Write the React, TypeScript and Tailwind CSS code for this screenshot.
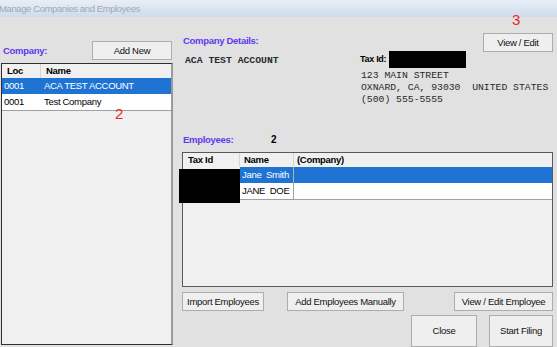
import React from "react";

function Btn({ className = "", children }: { className?: string; children: React.ReactNode }) {
  return (
    <div
      className={
        "flex items-center justify-center border border-[#adadad] bg-[#efefef] text-[#111] " + className
      }
    >
      {children}
    </div>
  );
}

export default function App() {
  const mono = "font-['Liberation_Mono',monospace] text-[9.75px] tracking-[0px] text-[#2a2a2a]";
  return (
    <div className="relative w-[557px] h-[347px] overflow-hidden bg-[#e1e1e1] font-['Liberation_Sans',Arial,sans-serif] text-[9.5px] tracking-[-0.3px] text-black leading-none">
      {/* title bar */}
      <div className="h-[17px] bg-gradient-to-b from-[#e8eef6] to-[#cfdcec] flex items-center">
        <span className="-ml-[1px] text-[#a2a9b2] text-[9.5px] tracking-[-0.4px]">
          Manage Companies and Employees
        </span>
      </div>

      <div className="flex h-[330px]">
        {/* left column */}
        <div className="w-[173px] flex flex-col">
          <div className="flex items-center justify-between pt-[24px] h-[43px]">
            <span className="pl-[3px] font-bold text-[#6038ee]">Company:</span>
            <Btn className="w-[80px] h-[19px] mr-[1px]">Add New</Btn>
          </div>
          <div className="mt-[3px] ml-[1px] h-[282px] bg-[#f0f0f0] border-l border-t border-b border-[#2f2f2f] border-r-2 border-r-[#9a9a9a] flex flex-col">
            <div className="flex h-[14px] font-bold">
              <div className="w-[39px] pl-[5px] border-r border-[#d4d4d4] flex items-center">Loc</div>
              <div className="pl-[5px] flex items-center">Name</div>
            </div>
            <div className="flex h-[16px] items-center bg-[#1e73d3] text-white">
              <div className="w-[39px] pl-[2px]">0001</div>
              <div className="pl-[3px]">ACA TEST ACCOUNT</div>
            </div>
            <div className="flex h-[17px] items-center bg-white border-b border-[#a0a0a0]">
              <div className="w-[39px] pl-[2px]">0001</div>
              <div className="pl-[3px]">Test Company</div>
            </div>
          </div>
        </div>

        {/* right column */}
        <div className="flex-1 pl-[9px] pr-[4px] flex flex-col">
          {/* company details */}
          <div className="flex h-[121px]">
            <div className="w-[178px] pt-[19px] flex flex-col">
              <div className="h-[10px] flex items-center pl-[1px] font-bold text-[#6038ee]">Company Details:</div>
              <div className={"mt-[10px] h-[10px] flex items-center pl-[3px] font-bold " + mono}>ACA TEST ACCOUNT</div>
            </div>
            <div className="w-[123px] pt-[34px] flex flex-col">
              <div className="flex h-[17px] items-center">
                <span className="w-[29px] font-bold text-[9px]">Tax Id:</span>
                <div className="w-[77px] h-[17px] bg-black" />
              </div>
              <div className={"mt-[2px] flex flex-col whitespace-pre pl-[1px] " + mono}>
                <div className="h-[12px] flex items-center">123 MAIN STREET</div>
                <div className="h-[12px] flex items-center">OXNARD, CA, 93030  UNITED STATES</div>
                <div className="h-[12px] flex items-center">(500) 555-5555</div>
              </div>
            </div>
            <div className="flex-1 pt-[16px]">
              <Btn className="w-[70px] h-[19px]">View / Edit</Btn>
            </div>
          </div>

          {/* employees label */}
          <div className="flex h-[10px] items-center">
            <span className="w-[89px] pl-[1px] font-bold text-[#6038ee]">Employees:</span>
            <span className="font-bold text-[10px]">2</span>
          </div>

          {/* employees table */}
          <div className="mt-[7px] h-[139px] border border-[#595959] bg-[#f0f0f0] flex flex-col">
            <div className="flex h-[14px] font-bold">
              <div className="w-[57px] pl-[5px] border-r border-[#d4d4d4] flex items-center">Tax Id</div>
              <div className="w-[54px] pl-[4px] border-r border-[#d4d4d4] flex items-center">Name</div>
              <div className="pl-[3px] flex items-center">(Company)</div>
            </div>
            <div className="flex h-[16px]">
              <div className="w-[57px]" />
              <div className="w-[54px] pl-[2px] bg-[#1e73d3] text-white border-r border-[#b0b0b0] flex items-center whitespace-pre">
                Jane  Smith
              </div>
              <div className="flex-1 bg-[#1e73d3]" />
            </div>
            <div className="flex h-[17px] border-b border-[#a0a0a0] bg-white">
              <div className="w-[57px] border-r border-[#a0a0a0]" />
              <div className="w-[54px] pl-[2px] border-r border-[#a0a0a0] flex items-center whitespace-pre">
                JANE  DOE
              </div>
              <div className="flex-1" />
            </div>
          </div>

          {/* employee buttons */}
          <div className="mt-[5px] flex h-[19px]">
            <Btn className="w-[82px] h-[19px]">Import Employees</Btn>
            <Btn className="ml-[23px] w-[117px] h-[19px]">Add Employees Manually</Btn>
            <Btn className="ml-auto w-[99px] h-[19px]">View / Edit Employee</Btn>
          </div>

          {/* bottom buttons */}
          <div className="mt-[4px] flex justify-end gap-[12px]">
            <Btn className="w-[66px] h-[32px]">Close</Btn>
            <Btn className="w-[64px] h-[32px]">Start Filing</Btn>
          </div>
        </div>
      </div>

      {/* redaction and annotations */}
      <div className="absolute left-[179px] top-[169px] w-[61px] h-[34px] bg-black" />
      <div className="absolute left-[115px] top-[106px] text-[15px] text-[#e8282a] tracking-normal">2</div>
      <div className="absolute left-[512px] top-[12px] text-[15px] text-[#e8282a] tracking-normal">3</div>
    </div>
  );
}
